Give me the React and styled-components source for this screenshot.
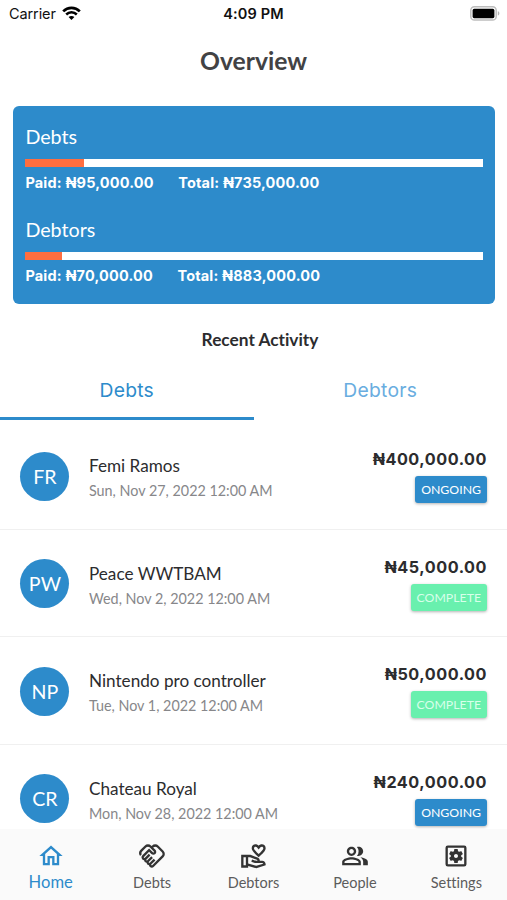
import React from 'react';
import styled, { createGlobalStyle } from 'styled-components';
import {
  MdOutlineHome,
  MdOutlineHandshake,
  MdOutlineVolunteerActivism,
  MdOutlinePeopleAlt,
  MdOutlineSettingsApplications
} from 'react-icons/md';

const summaries = [
  { title: 'Debts', paid: '₦95,000.00', total: '₦735,000.00', percent: 12.93 },
  { title: 'Debtors', paid: '₦70,000.00', total: '₦883,000.00', percent: 7.93 }
];

const activities = [
  { initials: 'FR', name: 'Femi Ramos', date: 'Sun, Nov 27, 2022 12:00 AM', amount: '₦400,000.00', complete: false },
  { initials: 'PW', name: 'Peace WWTBAM', date: 'Wed, Nov 2, 2022 12:00 AM', amount: '₦45,000.00', complete: true },
  { initials: 'NP', name: 'Nintendo pro controller', date: 'Tue, Nov 1, 2022 12:00 AM', amount: '₦50,000.00', complete: true },
  { initials: 'CR', name: 'Chateau Royal', date: 'Mon, Nov 28, 2022 12:00 AM', amount: '₦240,000.00', complete: false }
];

const links = [
  { label: 'Home', Icon: MdOutlineHome, active: true },
  { label: 'Debts', Icon: MdOutlineHandshake },
  { label: 'Debtors', Icon: MdOutlineVolunteerActivism },
  { label: 'People', Icon: MdOutlinePeopleAlt },
  { label: 'Settings', Icon: MdOutlineSettingsApplications }
];

const WifiIcon = () => (
  <svg width="19" height="15" viewBox="0 0 19 15" fill="none" stroke="#000">
    <path d="M1.2 5.4C5.8 0.7 13.2 0.7 17.8 5.4" strokeWidth="2.7" />
    <path d="M4.2 8.5C7.2 5.5 11.8 5.5 14.8 8.5" strokeWidth="2.5" />
    <path d="M9.5 14L6.6 11.1C8.3 9.5 10.7 9.5 12.4 11.1Z" fill="#000" stroke="none" />
  </svg>
);

const BatteryIcon = () => (
  <svg width="31" height="15" viewBox="0 0 31 15">
    <rect x="1.8" y="0.8" width="25.4" height="13.2" rx="3.6" fill="#fff" stroke="#bdbdbd" strokeWidth="1.5" />
    <rect x="3.6" y="2.8" width="21.8" height="9.4" rx="1.6" fill="#000" />
    <path d="M28.8 5.3C30.9 6 30.9 8.9 28.8 9.6Z" fill="#b5b5b5" />
  </svg>
);

const App = () => (
  <Screen>
    <GlobalStyle />
    <StatusBar>
      <Carrier>Carrier <WifiIcon /></Carrier>
      <Clock>4:09 PM</Clock>
      <Battery><BatteryIcon /></Battery>
    </StatusBar>
    <Title>Overview</Title>
    <Card>
      {summaries.map(item => (
        <Summary key={item.title}>
          <SummaryTitle>{item.title}</SummaryTitle>
          <Track>
            <Progress style={{ width: `${item.percent}%` }} />
          </Track>
          <Totals>
            <span>Paid: {item.paid}</span>
            <span>Total: {item.total}</span>
          </Totals>
        </Summary>
      ))}
    </Card>
    <SectionTitle>Recent Activity</SectionTitle>
    <Tabs>
      <Tab $active>Debts</Tab>
      <Tab>Debtors</Tab>
    </Tabs>
    <List>
      {activities.map(item => (
        <Row key={item.name}>
          <Avatar>{item.initials}</Avatar>
          <Details>
            <Name>{item.name}</Name>
            <DateText>{item.date}</DateText>
          </Details>
          <Side>
            <Amount>{item.amount}</Amount>
            <Status $complete={item.complete}>{item.complete ? 'COMPLETE' : 'ONGOING'}</Status>
          </Side>
        </Row>
      ))}
    </List>
    <Nav>
      {links.map(({ label, Icon, active }) => (
        <NavItem key={label} $active={active}>
          <Icon size={28} />
          <NavLabel $active={active}>{label}</NavLabel>
        </NavItem>
      ))}
    </Nav>
  </Screen>
);

const GlobalStyle = createGlobalStyle`
  * {
    box-sizing: border-box;
  }
  body {
    margin: 0;
    background: #fff;
  }
`

const Screen = styled.div`
  display: flex;
  flex-direction: column;
  width: 507px;
  height: 900px;
  overflow: hidden;
  background: #fff;
  color: #2c2c2e;
  font-family: Lato, sans-serif;
  font-variant-ligatures: none;
`

const StatusBar = styled.div`
  display: grid;
  grid-template-columns: 1fr auto 1fr;
  align-items: center;
  flex: none;
  height: 27px;
  padding: 0 7px 0 9px;
  color: #111;
  font-family: Inter, sans-serif;
  font-size: 14.5px;
`

const Carrier = styled.div`
  display: flex;
  align-items: center;
  gap: 6px;
  letter-spacing: -0.1px;
`

const Clock = styled.div`
  margin-right: 2px;
  font-weight: 600;
  letter-spacing: 0.15px;
`

const Battery = styled.div`
  display: flex;
  justify-content: flex-end;
`

const Title = styled.h1`
  flex: none;
  height: 79px;
  margin: 0;
  padding-top: 1px;
  color: #424244;
  font-size: 24.7px;
  font-weight: 700;
  line-height: 66px;
  text-align: center;
`

const Card = styled.div`
  flex: none;
  height: 198px;
  margin: 0 12.5px 0 13px;
  padding: 17px 12px 0 12.4px;
  border-radius: 6px;
  background: #2d8bcb;
  color: #fff;
`

const Summary = styled.div`
  height: 93px;
`

const SummaryTitle = styled.div`
  height: 36px;
  font-size: 19.7px;
  line-height: 28px;
`

const Track = styled.div`
  height: 8px;
  background: #fff;
`

const Progress = styled.div`
  height: 100%;
  background: #ff6e40;
`

const Totals = styled.div`
  display: flex;
  gap: 24.5px;
  padding-top: 7px;
  font-family: Inter, sans-serif;
  font-size: 14.5px;
  font-weight: 700;
  letter-spacing: 0.17px;
  line-height: 18px;
`

const SectionTitle = styled.h2`
  flex: none;
  height: 56px;
  margin: 0;
  padding-left: 13px;
  font-size: 17.3px;
  font-weight: 700;
  line-height: 71px;
  text-align: center;
`

const Tabs = styled.div`
  display: flex;
  flex: none;
  height: 60px;
`

const Tab = styled.div`
  flex: 1;
  border-bottom: 3px solid ${props => props.$active ? '#2d8bcb' : 'transparent'};
  color: ${props => props.$active ? '#2d8bcb' : '#69ade0'};
  font-family: Inter, sans-serif;
  font-size: 19.3px;
  letter-spacing: 0.25px;
  line-height: 60px;
  text-align: center;
`

const List = styled.div`
  flex: 1;
  min-height: 0;
  padding-top: 2px;
  overflow: hidden;
`

const Row = styled.div`
  display: flex;
  height: 107.5px;
  padding: 29px 20px 0 20.4px;
  border-bottom: 1px solid #f0f0f0;
`

const Avatar = styled.div`
  width: 49px;
  height: 49px;
  margin: 0.5px 19.6px 0 0;
  border-radius: 50%;
  background: #2d8bcb;
  color: #fff;
  font-size: 19.6px;
  line-height: 50px;
  text-align: center;
`

const Details = styled.div`
  flex: 1;
  padding-top: 3px;
`

const Name = styled.div`
  font-size: 17.15px;
  line-height: 24px;
`

const DateText = styled.div`
  padding-top: 1px;
  color: #87878a;
  font-size: 14.35px;
  line-height: 24px;
`

const Side = styled.div`
  display: flex;
  flex-direction: column;
  align-items: flex-end;
`

const Amount = styled.div`
  height: 26px;
  margin-top: -4px;
  font-family: Inter, sans-serif;
  font-size: 16.2px;
  font-weight: 700;
  letter-spacing: 0.53px;
  line-height: 24px;
`

const Status = styled.div`
  height: 27px;
  margin-top: 3px;
  padding: 0 6px;
  border-radius: 3px;
  background: ${props => props.$complete ? '#69f0ae' : '#2d8bcb'};
  box-shadow: 0 1px 3px rgba(0, 0, 0, 0.3);
  color: ${props => props.$complete ? '#d8ffea' : '#fff'};
  font-size: 12.3px;
  line-height: 28px;
`

const Nav = styled.nav`
  display: flex;
  flex: none;
  height: 71px;
  background: #fafafa;
`

const NavItem = styled.div`
  display: flex;
  flex: 1;
  flex-direction: column;
  align-items: center;
  padding-top: 13px;
  color: ${props => props.$active ? '#2d8bcb' : '#333'};
`

const NavLabel = styled.div`
  color: ${props => props.$active ? '#2d8bcb' : '#5c5c5c'};
  font-size: ${props => props.$active ? '16.6px' : '14.5px'};
  line-height: ${props => props.$active ? '24px' : '26px'};
`

export default App;
